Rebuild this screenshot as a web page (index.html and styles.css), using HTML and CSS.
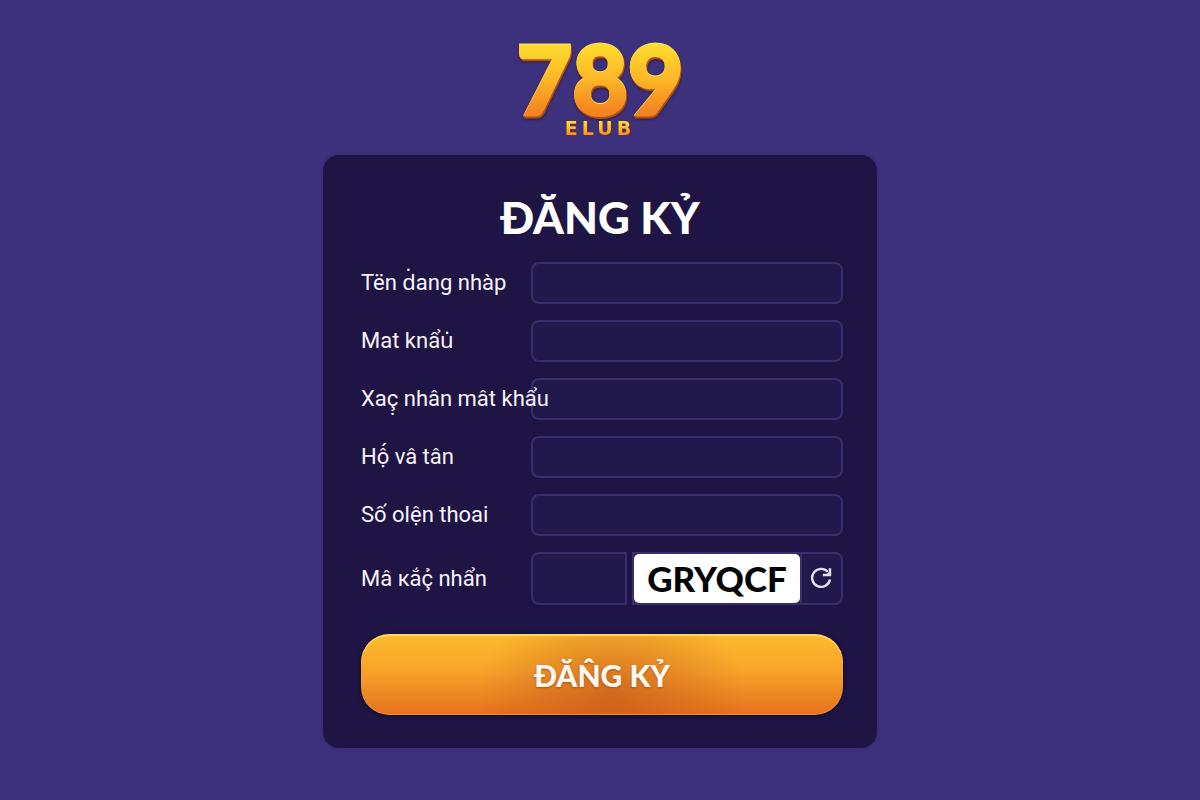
FILE: index.html
```html
<!DOCTYPE html>
<html lang="vi">
<head>
  <meta charset="UTF-8">
  <title>789 ELUB – Đăng ký</title>
  <meta name="viewport" content="width=device-width, initial-scale=1">
  <link rel="stylesheet" href="styles.css">
</head>
<body>
  <header class="logo">
    <div class="logo-number">789</div>
    <div class="logo-name">ELUB</div>
  </header>
  <main class="container">
    <h1>ĐĂNG KỶ</h1>
    <form id="registerForm">
      <div class="input-group">
        <label for="username">Tën ḋang nhàp</label>
        <input type="text" id="username" name="username" autocomplete="username">
      </div>
      <div class="input-group">
        <label for="password">Mat knẩu̇</label>
        <input type="password" id="password" name="password" autocomplete="new-password">
      </div>
      <div class="input-group">
        <label for="confirm">Xaç̣ nhân mât khẩu</label>
        <input type="password" id="confirm" name="confirm" autocomplete="new-password">
      </div>
      <div class="input-group">
        <label for="fullname">Hộ́ vâ tân</label>
        <input type="text" id="fullname" name="fullname" autocomplete="name">
      </div>
      <div class="input-group">
        <label for="phone">Số olện thoai</label>
        <input type="tel" id="phone" name="phone" autocomplete="tel">
      </div>
      <div class="input-group">
        <label for="captcha">Mâ кắç̉ nhẩn</label>
        <div class="captcha">
          <input type="text" id="captcha" name="captcha" autocomplete="off">
          <div class="captcha-box">
            <span class="captcha-code" id="captchaCode">GRYQCF</span>
            <button type="button" class="refresh" id="refreshBtn" aria-label="Refresh">
              <svg width="24" height="24" viewBox="0 0 24 24" fill="none" stroke="currentColor" stroke-width="2.4">
                <path d="M17.8 4.8A9 9 0 1 0 20 12.5"/>
                <path d="M20 1.2V8H12.8"/>
                <path d="M20 4V8H15.5Z" fill="currentColor" stroke="none"/>
              </svg>
            </button>
          </div>
        </div>
      </div>
      <button type="submit" class="submit" id="submitBtn">ĐĂN̂G KỶ</button>
    </form>
  </main>
</body>
</html>
```
FILE: styles.css
```css
* {
  box-sizing: border-box;
}
body {
  font-family: Roboto, 'Noto Sans', sans-serif;
  background: #3d307c;
  color: #f7f3fa;
  margin: 0;
  padding: 36px 16px 52px;
}

/* logo */
.logo {
  text-align: center;
  margin-bottom: 17px;
}
.logo-number,
.logo-name {
  color: transparent;
  font-weight: bold;
  background: linear-gradient(#ffdc2e 10%, #fdb827 50%, #f58420 90%);
  -webkit-background-clip: text;
  background-clip: text;
}
.logo-number {
  width: fit-content;
  margin: 0 auto;
  padding: 0 4px;
  font-family: Lato, 'Liberation Sans', sans-serif;
  font-size: 96px;
  font-weight: 900;
  line-height: 84px;
  -webkit-text-stroke: 3px transparent;
  filter: drop-shadow(0 -1px 0 #ffe66b) drop-shadow(1px 2px 0 #a65318) drop-shadow(0 1px 1px #42162f);
}
.logo-name {
  font-family: 'DejaVu Sans', sans-serif;
  font-size: 19px;
  line-height: 16px;
  letter-spacing: 4px;
  padding-bottom: 2px;
  filter: drop-shadow(1px 1px 0 #6b2d2b);
}

/* card */
.container {
  max-width: 554px;
  margin: 0 auto;
  background: #1f1545;
  border-radius: 16px;
  box-shadow: 0 0 3px #30256a;
  padding: 32px 34px 33px 38px;
}
h1 {
  font-family: Lato, 'Open Sans', sans-serif;
  font-size: 44px;
  font-weight: 900;
  line-height: 60px;
  text-align: center;
  color: #fff;
  margin: 0 4px 15px 0;
}
.input-group {
  display: grid;
  grid-template-columns: 170px 1fr;
  align-items: center;
  margin-bottom: 16px;
}
label {
  position: relative;
  font-size: 22px;
  line-height: 28px;
  white-space: nowrap;
}
input {
  width: 100%;
  min-width: 0;
  height: 42px;
  padding: 0 12px;
  border: 2px solid #392d70;
  border-radius: 8px;
  background: #21184b;
  color: #fff;
  font: inherit;
  font-size: 20px;
}

/* captcha */
.captcha {
  display: flex;
  gap: 5px;
  height: 53px;
}
.captcha input {
  flex: 1;
  height: 100%;
  border-radius: 8px 0 0 8px;
}
.captcha-box {
  display: flex;
  width: 211px;
  border: 2px solid #392d70;
  border-radius: 0 8px 8px 0;
  background: #21184b;
}
.captcha-code {
  flex: 1;
  border-radius: 5px;
  background: #fff;
  color: #050505;
  font-family: Lato, 'Open Sans', sans-serif;
  font-size: 35px;
  font-weight: 900;
  line-height: 48px;
  text-align: center;
}
.refresh {
  display: flex;
  align-items: center;
  justify-content: center;
  width: 41px;
  padding: 0;
  border: none;
  border-left: 2px solid #392d70;
  background: none;
  color: #e6dff0;
  cursor: pointer;
}
.submit {
  display: block;
  width: 100%;
  height: 81px;
  margin-top: 29px;
  border: none;
  border-radius: 28px;
  background:
    radial-gradient(ellipse 28% 120% at 52% 75%, rgba(190, 82, 24, 0.6), rgba(190, 82, 24, 0.3) 50%, transparent),
    linear-gradient(#fdbc2d, #f8a42a 45%, #e6701e);
  box-shadow: inset 0 2px 1px #ffd968, inset 0 -1px 1px #ef9140, 0 1px 4px #100820;
  color: #fffaf0;
  font-family: Lato, 'Open Sans', sans-serif;
  font-size: 30px;
  font-weight: 900;
  text-shadow: 0 1px 2px #a85220;
  cursor: pointer;
}
```
